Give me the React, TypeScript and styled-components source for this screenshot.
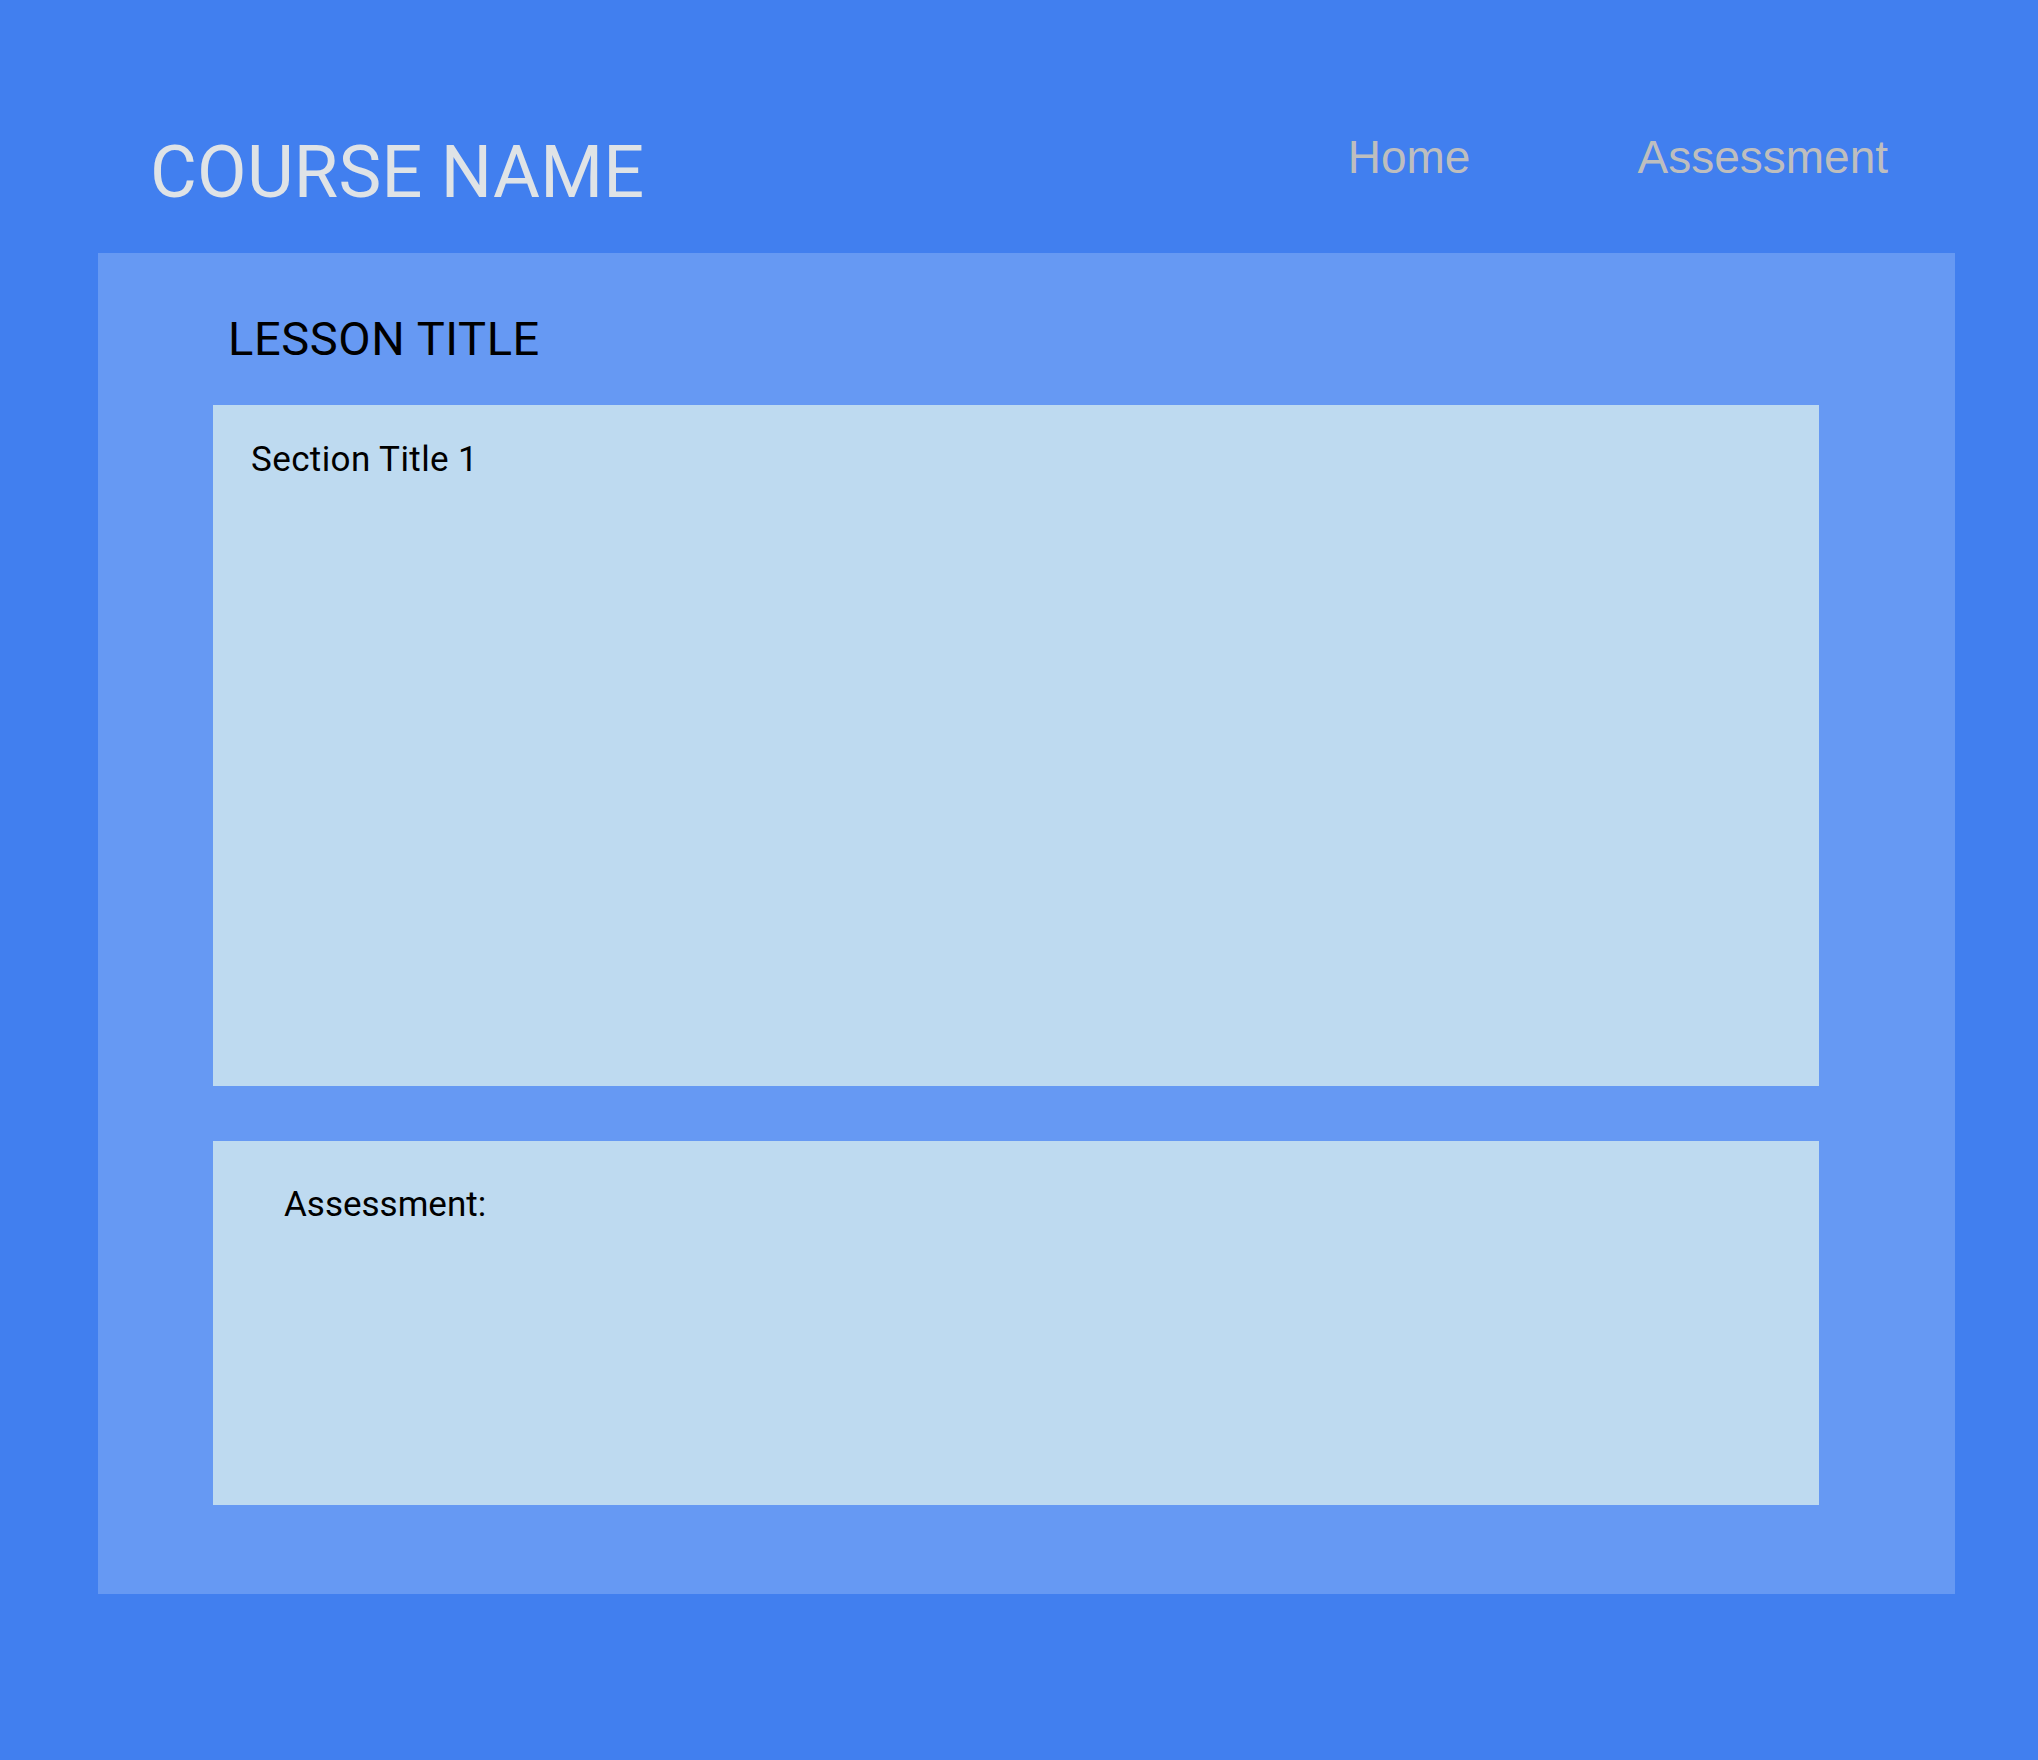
import React from "react";
import styled, { createGlobalStyle } from "styled-components";

const GlobalStyle = createGlobalStyle`
  html, body {
    margin: 0;
    padding: 0;
    background: #417fef;
  }
  body {
    font-family: Roboto, "Liberation Sans", sans-serif;
    min-height: 100vh;
  }
  * { box-sizing: border-box; }
`;

const Page = styled.div`
  min-height: 100vh;
  background: #417fef;
  display: flex;
  flex-direction: column;
`;

const Header = styled.header`
  height: 253px;
  display: flex;
  justify-content: space-between;
  align-items: flex-start;
  padding: 133px 150px 0 150px;
`;

const CourseTitle = styled.h1`
  margin: 0;
  padding-top: 4px;
  font-family: Roboto, sans-serif;
  font-weight: 400;
  font-size: 72px;
  line-height: 1;
  letter-spacing: 0.25px;
  color: #dfe3e6;
  white-space: nowrap;
`;

const Nav = styled.nav`
  display: flex;
  gap: 167px;
  padding-top: 1px;
`;

const NavLink = styled.a`
  font-family: "Liberation Sans", Arial, sans-serif;
  font-size: 46px;
  line-height: 1;
  color: #bebebe;
  text-decoration: none;
  white-space: nowrap;
`;

const Panel = styled.main`
  margin-left: 98px;
  width: 1857px;
  background: #6699f3;
  display: flex;
  flex-direction: column;
  padding: 62px 0 89px 0;
`;

const LessonTitle = styled.h2`
  margin: 0 0 43px 130px;
  font-family: Roboto, sans-serif;
  font-weight: 400;
  font-size: 47px;
  line-height: 1;
  letter-spacing: 0.6px;
  color: #000;
`;

const Card = styled.section<{ $height: number; $padTop: number; $padLeft: number }>`
  margin-left: 115px;
  width: 1606px;
  height: ${(p) => p.$height}px;
  background: #bedaf0;
  padding: ${(p) => p.$padTop}px 0 0 ${(p) => p.$padLeft}px;
  & + & {
    margin-top: 55px;
  }
`;

const CardTitle = styled.h3<{ $spacing?: number }>`
  margin: 0;
  font-family: Roboto, sans-serif;
  font-weight: 400;
  font-size: 35px;
  line-height: 1;
  letter-spacing: ${(p) => p.$spacing ?? 0}px;
  color: #000;
`;

export default function App() {
  return (
    <>
      <GlobalStyle />
      <Page>
        <Header>
          <CourseTitle>COURSE NAME</CourseTitle>
          <Nav>
            <NavLink href="#">Home</NavLink>
            <NavLink href="#">Assessment</NavLink>
          </Nav>
        </Header>
        <Panel>
          <LessonTitle>LESSON TITLE</LessonTitle>
          <Card $height={681} $padTop={37} $padLeft={38}>
            <CardTitle $spacing={0.4}>Section Title 1</CardTitle>
          </Card>
          <Card $height={364} $padTop={46} $padLeft={71}>
            <CardTitle>Assessment:</CardTitle>
          </Card>
        </Panel>
      </Page>
    </>
  );
}
